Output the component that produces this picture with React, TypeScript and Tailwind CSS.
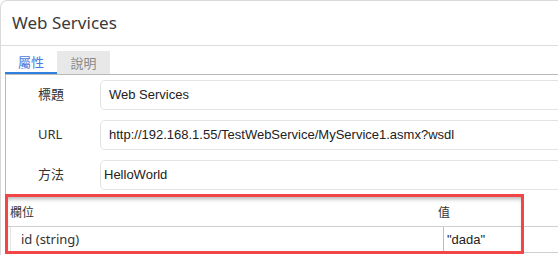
import React from 'react';

const fields = [
  { label: '標題', value: 'Web Services', pad: 'pl-[8px]' },
  { label: 'URL', value: 'http://192.168.1.55/TestWebService/MyService1.asmx?wsdl', pad: 'pl-[8px]' },
  { label: '方法', value: 'HelloWorld', pad: 'pl-[3px]' },
];

export default function App(): JSX.Element {
  return (
    <div className="relative w-[558px] h-[255px] overflow-hidden bg-white text-[#333] font-['Noto_Sans','Noto_Sans_CJK_TC',sans-serif]">
      {/* dialog card */}
      <div className="h-full w-[580px] border-t border-l border-[#d9d9d9] rounded-tl-[7px]">
        <div className="h-[45px] border-b border-[#dcdcdc] pl-[11px] pt-[11px] text-[17px] leading-[22px] text-[#3a3a3a]">
          Web Services
        </div>

        <div className="pl-[4px] pt-[5px]">
          {/* tabs */}
          <div className="flex h-[23px] text-[13px] font-['Noto_Sans_CJK_TC',sans-serif]">
            <div className="w-[52px] flex items-center justify-center border-b-2 border-[#2f7fe0] text-[#4a7be0]">屬性</div>
            <div className="w-[53px] flex items-center justify-center bg-[#e8e8e8] text-[#8a8a8a]">說明</div>
          </div>

          {/* panel */}
          <div className="border-l border-t border-[#b9b9b9] pt-[5px]">
            <div className="flex flex-col gap-[10px]">
              {fields.map((f) => (
                <div key={f.label} className="flex items-center h-[30px]">
                  <div className="w-[94px] shrink-0 pl-[32px] text-[13px] font-['Noto_Sans','Noto_Sans_CJK_TC',sans-serif] text-[#333]">
                    {f.label}
                  </div>
                  <div className={`flex-1 h-full flex items-center border border-[#e3e3e3] rounded-[5px] ${f.pad} text-[13px] font-['Liberation_Sans',sans-serif] text-[#222]`}>
                    {f.value}
                  </div>
                </div>
              ))}
            </div>

            {/* params table */}
            <div className="mt-[7px]">
              <div className="flex h-[29px] items-center text-[12px] font-['Noto_Sans_CJK_TC',sans-serif]">
                <div className="w-[432px] pl-[4px]">欄位</div>
                <div className="flex-1">值</div>
              </div>
              <div className="flex h-[27px] border-t border-b border-[#cfcfcf] text-[13px]">
                <div className="w-[433px] ml-[4px] pl-[10px] flex items-center border-l border-[#e6e6e6]">id (string)</div>
                <div className="flex-1 pl-[3px] flex items-center border-l border-[#bdbdbd] font-['Liberation_Sans',sans-serif] text-[#222]">"dada"</div>
              </div>
            </div>
          </div>
        </div>
      </div>

      {/* red highlight annotation */}
      <div className="absolute left-[5px] top-[194px] w-[519px] h-[60px] border-[3px] border-[#f24646] shadow-[inset_0_4px_4px_-2px_rgba(0,0,0,0.3)]" />
    </div>
  );
}
